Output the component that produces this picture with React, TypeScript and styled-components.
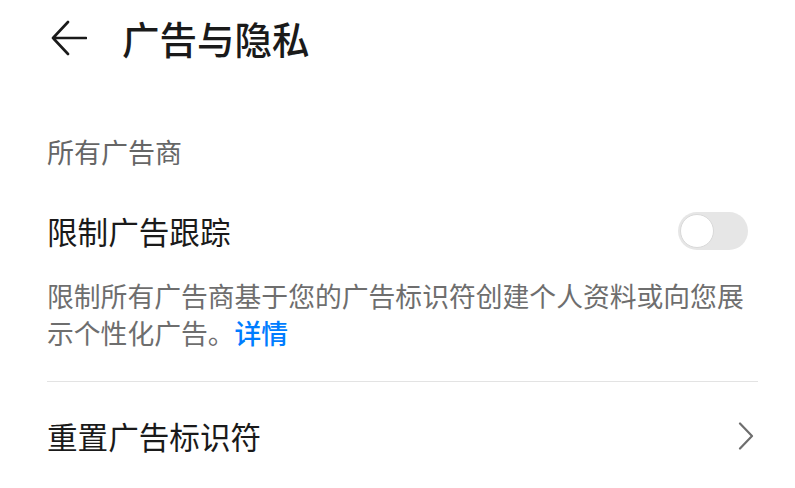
import React, { useState } from 'react';
import styled, { createGlobalStyle } from 'styled-components';

const GlobalStyle = createGlobalStyle`
  html, body {
    margin: 0;
    padding: 0;
    background: #ffffff;
  }
  body {
    font-family: "Noto Sans CJK SC", "Noto Sans", sans-serif;
    -webkit-font-smoothing: antialiased;
  }
`;

export default function App() {
  const [limited, setLimited] = useState(false);

  return (
    <>
      <GlobalStyle />
      <Page>
        {/* 상단 헤더 */}
        <Header>
          <BackButton aria-label="back">
            <svg width="36" height="36" viewBox="0 0 36 36" fill="none">
              <path
                d="M2 18 H35 M17 2 L2 18 L17 34"
                stroke="#1a1a1a"
                strokeWidth="2.6"
                strokeLinecap="round"
                strokeLinejoin="round"
              />
            </svg>
          </BackButton>
          <Title>广告与隐私</Title>
        </Header>

        <Content>
          <SectionTitle>所有广告商</SectionTitle>

          <Row>
            <RowLabel>限制广告跟踪</RowLabel>
            <Switch
              $on={limited}
              role="switch"
              aria-checked={limited}
              onClick={() => setLimited((v) => !v)}
            >
              <Knob $on={limited} />
            </Switch>
          </Row>

          <Description>
            限制所有广告商基于您的广告标识符创建个人资料或向您展示个性化广告。
            <DetailLink>详情</DetailLink>
          </Description>

          <Divider />

          <Row $tall>
            <RowLabel>重置广告标识符</RowLabel>
            <Chevron>
              <svg width="16" height="28" viewBox="0 0 16 28" fill="none">
                <path
                  d="M2 1.5 L14 14 L2 26.5"
                  stroke="#6e6e6e"
                  strokeWidth="2.2"
                  strokeLinecap="round"
                  strokeLinejoin="round"
                />
              </svg>
            </Chevron>
          </Row>
        </Content>
      </Page>
    </>
  );
}

/* ----------------- STYLES ----------------- */

const Page = styled.div`
  width: 795px;
  min-height: 488px;
  background: #ffffff;
  overflow: hidden;
`;

const Header = styled.div`
  display: flex;
  align-items: center;
  height: 76px;
  padding-left: 50px;
`;

const BackButton = styled.button`
  display: flex;
  align-items: center;
  justify-content: center;
  width: 38px;
  height: 38px;
  padding: 0;
  border: none;
  background: none;
  cursor: pointer;
`;

const Title = styled.h1`
  margin: 0 0 0 34px;
  font-size: 37.5px;
  font-weight: 500;
  line-height: 44px;
  color: #1a1a1a;
`;

const Content = styled.div`
  padding: 0 37px 0 47px;
`;

const SectionTitle = styled.div`
  padding: 58px 0 25px;
  font-size: 27px;
  line-height: 36px;
  color: #666666;
`;

const Row = styled.div<{ $tall?: boolean }>`
  display: flex;
  align-items: center;
  justify-content: space-between;
  height: ${(p) => (p.$tall ? '108px' : '72px')};
`;

const RowLabel = styled.div`
  font-size: 30.6px;
  line-height: 40px;
  color: #1a1a1a;
`;

const Switch = styled.button<{ $on: boolean }>`
  position: relative;
  width: 70px;
  height: 38px;
  margin-right: 10px;
  padding: 0;
  border: none;
  border-radius: 19px;
  background: ${(p) => (p.$on ? '#007dff' : '#e6e6e6')};
  cursor: pointer;
  transition: background 0.2s;
`;

const Knob = styled.span<{ $on: boolean }>`
  position: absolute;
  top: 2px;
  left: ${(p) => (p.$on ? '34px' : '2px')};
  width: 34px;
  height: 34px;
  box-sizing: border-box;
  border-radius: 50%;
  background: #ffffff;
  border: 1.5px solid #d9d9d9;
  transition: left 0.2s;
`;

const Description = styled.p`
  margin: 10px 0 30px;
  font-size: 26.8px;
  line-height: 37px;
  color: #6e6e6e;
`;

const DetailLink = styled.span`
  color: #007dff;
  font-weight: 500;
  cursor: pointer;
`;

const Divider = styled.div`
  height: 1px;
  background: #e3e3e3;
`;

const Chevron = styled.div`
  display: flex;
  align-items: center;
  margin-right: 4px;
`;
